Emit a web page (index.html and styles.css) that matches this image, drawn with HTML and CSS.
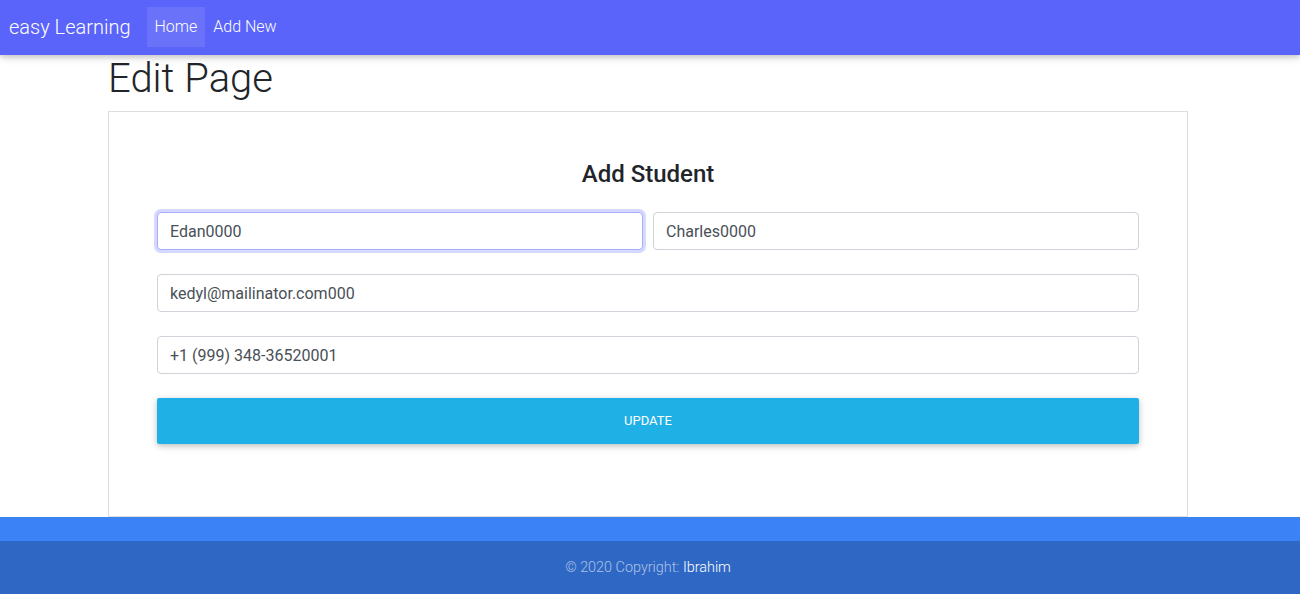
FILE: index.html
```html
<!DOCTYPE html>
<html>
<head>
<meta charset="utf-8">
<link rel="stylesheet" href="styles.css">
</head>
<body>
<nav class="navbar">
  <span class="brand">easy Learning</span>
  <ul class="nav">
    <li class="nav-item active">Home</li>
    <li class="nav-item">Add New</li>
  </ul>
</nav>
<main class="main">
  <h1 class="page-title">Edit Page</h1>
  <section class="card">
    <h4 class="card-title">Add Student</h4>
    <form class="form">
      <div class="row">
        <input class="field focused" type="text" value="Edan0000">
        <input class="field" type="text" value="Charles0000">
      </div>
      <div class="row">
        <input class="field" type="text" value="kedyl@mailinator.com000">
      </div>
      <div class="row">
        <input class="field" type="text" value="+1 (999) 348-36520001">
      </div>
      <button class="btn" type="button">Update</button>
    </form>
  </section>
</main>
<div class="band"></div>
<footer class="footer">
  <span class="copy">© 2020 Copyright: <span class="owner">Ibrahim</span></span>
</footer>
</body>
</html>
```
FILE: styles.css
```css
* { box-sizing: border-box; }
html, body { margin: 0; padding: 0; }
body {
  font-family: Roboto, "Liberation Sans", sans-serif;
  color: #212529;
  background: #fff;
  width: 1300px;
  height: 594px;
  overflow: hidden;
}
.navbar {
  height: 55px;
  background: #5a63fa;
  display: flex;
  align-items: center;
  padding: 0 9px 2px 9px;
  box-shadow: 0 2px 5px 0 rgba(0,0,0,0.16), 0 2px 10px 0 rgba(0,0,0,0.12);
  position: relative;
  z-index: 2;
}
.brand {
  color: #fff;
  font-size: 20px;
  font-weight: 300;
  margin-right: 16px;
}
.nav {
  list-style: none;
  margin: 0;
  padding: 0;
  display: flex;
}
.nav-item {
  color: #fff;
  font-size: 16px;
  font-weight: 300;
  height: 40px;
  line-height: 40px;
  padding: 0 8px;
}
.nav-item.active { background: rgba(255,255,255,0.1); }
.main {
  margin-left: 108px;
  width: 1080px;
  height: 462px;
}
.page-title {
  margin: 0 0 8px 0;
  font-size: 40px;
  font-weight: 300;
  line-height: 48px;
}
.card {
  border: 1px solid #dedede;
  height: 406px;
  padding: 44px 48px 0 48px;
}
.card-title {
  margin: 0 0 20px 0;
  text-align: center;
  font-size: 24px;
  font-weight: 500;
  line-height: 36px;
}
.row {
  display: flex;
  gap: 10px;
  margin-bottom: 24px;
}
.field {
  flex: 1;
  height: 38px;
  border: 1px solid #ced4da;
  border-radius: 4px;
  padding: 0 12px;
  font-family: Roboto, "Liberation Sans", sans-serif;
  font-size: 16px;
  color: #495057;
  background: #fff;
  outline: none;
}
.field.focused {
  border-color: #a8acfd;
  box-shadow: 0 0 0 3px rgba(90,99,250,0.25);
}
.btn {
  display: block;
  width: 100%;
  height: 46px;
  border: 0;
  border-radius: 2px;
  padding: 0 0 2px 0;
  background: #1fb0e6;
  color: #fff;
  text-transform: uppercase;
  font-family: Roboto, "Liberation Sans", sans-serif;
  font-size: 13px;
  font-weight: 400;
  box-shadow: 0 2px 5px 0 rgba(0,0,0,0.16), 0 2px 10px 0 rgba(0,0,0,0.12);
}
.band {
  height: 24px;
  background: #3b82f6;
}
.footer {
  height: 53px;
  background: #2f68c4;
  display: flex;
  align-items: center;
  justify-content: center;
  padding-bottom: 1px;
}
.copy {
  font-size: 14.4px;
  font-weight: 300;
  color: rgba(255,255,255,0.6);
  margin-left: -4px;
}
.owner { color: #fff; font-weight: 300; }
```
